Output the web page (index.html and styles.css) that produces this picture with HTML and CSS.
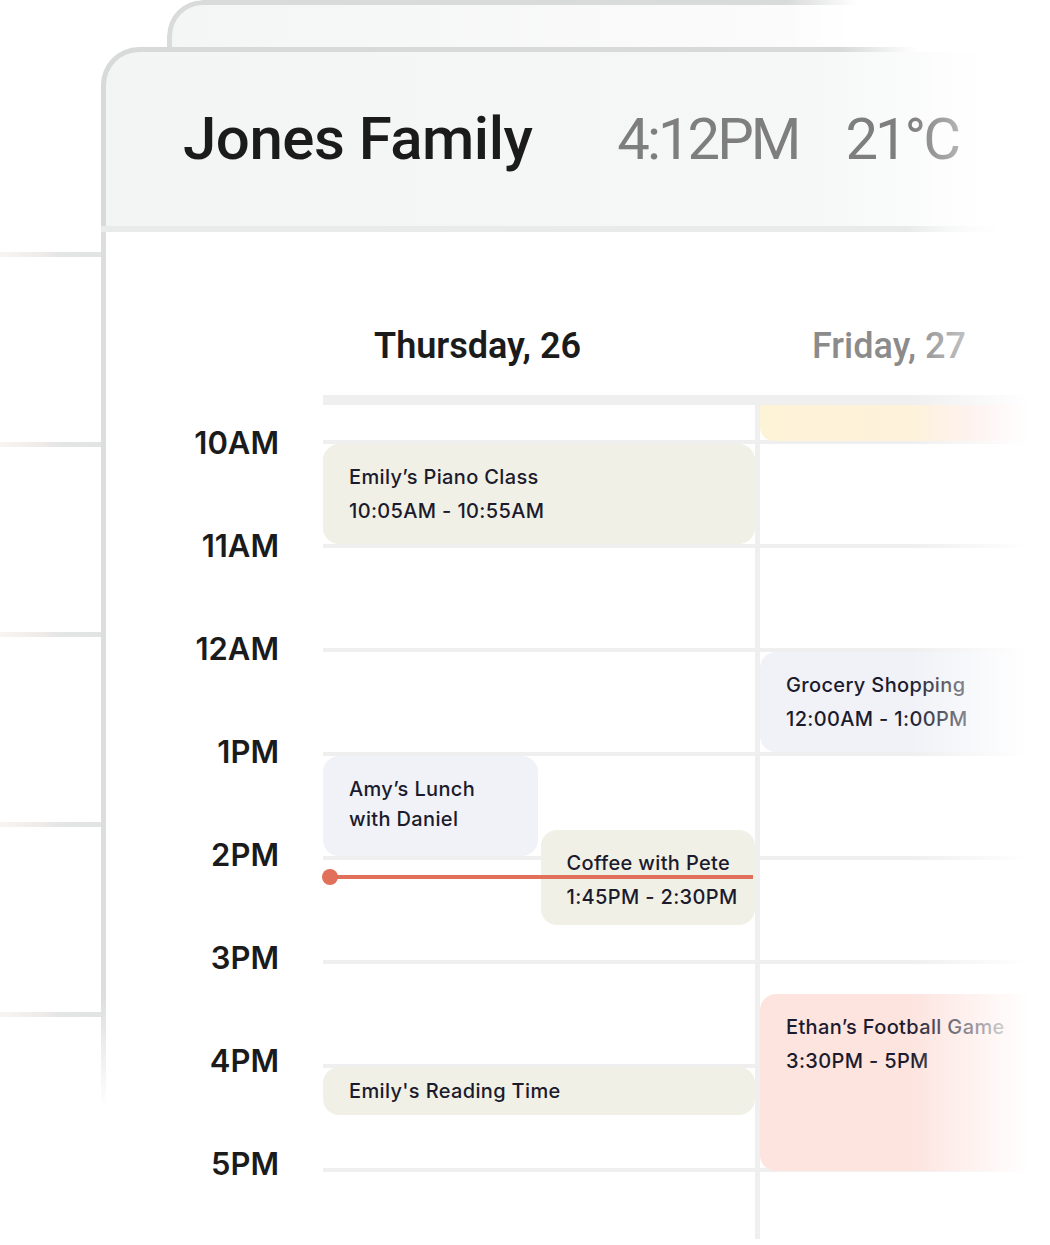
FILE: index.html
```html
<!DOCTYPE html>
<html lang="en">

<head>
  <meta charset="UTF-8" />
  <meta name="viewport" content="width=device-width, initial-scale=1.0" />
  <title>Jones Family Calendar</title>
  <link rel="stylesheet" href="styles.css">
</head>

<body>
  <div class="back-card"></div>

  <div class="scene">
    <div class="rails">
      <div class="rail"></div>
      <div class="rail"></div>
      <div class="rail"></div>
      <div class="rail"></div>
      <div class="rail"></div>
    </div>

    <div class="card">
      <header class="card-head">
        <h1 class="family">Jones Family</h1>
        <span class="clock">4:12PM</span>
        <span class="temp">21°C</span>
      </header>

      <main class="card-body">
        <div class="calendar">
          <div></div>
          <div class="day-title">Thursday, 26</div>
          <div class="day-title next">Friday, 27</div>

          <div class="hours">
            <div class="hour"><span>10AM</span></div>
            <div class="hour"><span>11AM</span></div>
            <div class="hour"><span>12AM</span></div>
            <div class="hour"><span>1PM</span></div>
            <div class="hour"><span>2PM</span></div>
            <div class="hour"><span>3PM</span></div>
            <div class="hour"><span>4PM</span></div>
            <div class="hour"><span>5PM</span></div>
          </div>

          <!-- rows are 5 minute slots, row 2 = 10:00 -->
          <div class="day">
            <div class="event beige wide on-hour" style="grid-row: 2 / 14">
              <div>Emily’s Piano Class</div>
              <div class="when">10:05AM - 10:55AM</div>
            </div>
            <div class="event slate on-hour" style="grid-row: 38 / 50; grid-column: 1">
              <div>Amy’s Lunch<br>with Daniel</div>
            </div>
            <div class="event beige" style="grid-row: 47 / 58; grid-column: 2">
              <div>Coffee with Pete</div>
              <div class="when">1:45PM - 2:30PM</div>
            </div>
            <div class="event beige wide on-hour short" style="grid-row: 74 / 80">
              <div>Emily's Reading Time</div>
            </div>
            <div class="now" style="grid-row: 51 / span 3"></div>
          </div>

          <div class="day friday">
            <div class="event butter" style="grid-row: 1 / 2"></div>
            <div class="event slate on-hour" style="grid-row: 26 / 38">
              <div>Grocery Shopping</div>
              <div class="when">12:00AM - 1:00PM</div>
            </div>
            <div class="event rose to-hour" style="grid-row: 66 / 86">
              <div>Ethan’s Football Game</div>
              <div class="when">3:30PM - 5PM</div>
            </div>
          </div>
        </div>
      </main>
    </div>
  </div>

  <div class="fade"></div>
</body>

</html>
```

FILE: styles.css
```css
body {
  margin: 0;
  height: 1245px;
  overflow: hidden;
  position: relative;
  background: #fff;
  font-family: Roboto, "Liberation Sans", sans-serif;
  color: #1b1b1b;
}

.back-card {
  margin-left: 167px;
  height: 42px;
  border-top: 5px solid #d9dada;
  border-left: 5px solid #d9dada;
  border-top-left-radius: 36px;
  background: linear-gradient(to right, #f4f5f5, #fafafa 60%, #fff);
  -webkit-mask-image: linear-gradient(to right, #000 620px, transparent 690px);
  mask-image: linear-gradient(to right, #000 620px, transparent 690px);
}

.scene {
  display: flex;
  align-items: flex-start;
}

.rails {
  flex: none;
  width: 101px;
  padding-top: 205px;
  display: flex;
  flex-direction: column;
  gap: 185px;
}

.rail {
  height: 5px;
  background: linear-gradient(to right, rgba(240, 234, 230, 0.5), #efebe8 40%, #e4e5e5 60%, #e2e3e3);
}

.card {
  flex: 1;
  min-width: 0;
}

.card-head {
  display: flex;
  align-items: center;
  height: 174px;
  padding-left: 77px;
  border: 5px solid transparent;
  border-right: 0;
  border-bottom: 0;
  border-top-left-radius: 38px;
  background:
    linear-gradient(to right, #f3f4f4, #f6f7f7 75%, #fff 95%) padding-box,
    linear-gradient(to right, #d8d9d9 78%, rgba(216, 217, 217, 0) 86%) border-box;
}

.family {
  margin: 0 85px 0 0;
  font-size: 60px;
  line-height: 60px;
  font-weight: 500;
  letter-spacing: -0.5px;
}

.clock,
.temp {
  font-size: 58px;
  line-height: 60px;
  font-weight: 400;
  color: #7e7e7e;
  letter-spacing: -3px;
}

.clock {
  margin-right: 47px;
}

.card-body {
  display: block;
  height: 1007px;
  overflow: hidden;
  border-top: 6px solid transparent;
  border-left: 5px solid transparent;
  background:
    linear-gradient(to right, #e9eaea 85%, rgba(233, 234, 234, 0) 95%) left top / 100% 6px no-repeat border-box,
    linear-gradient(#dcdddd 76%, rgba(220, 221, 221, 0) 87%) left top / 5px 100% no-repeat border-box,
    #fff padding-box;
}

.calendar {
  display: grid;
  grid-template-columns: 217px 432px 1fr;
}

.day-title {
  padding: 96px 0 31px 51px;
  font-size: 36px;
  line-height: 36px;
  font-weight: 600;
  border-bottom: 10px solid #efefef;
}

.day-title.next {
  padding-left: 57px;
  font-weight: 500;
  color: #8b8b8b;
}

.hours {
  padding-top: 38px;
}

.hour {
  height: 103px;
  padding-right: 44px;
  text-align: right;
  font-family: Inter, "Liberation Sans", sans-serif;
  font-size: 31px;
  line-height: 32px;
  font-weight: 600;
}

.hour span {
  display: block;
  transform: translateY(-50%);
}

.day {
  display: grid;
  grid-template-columns: 1fr 1fr;
  grid-template-rows: 35px repeat(96, calc(104px / 12));
  column-gap: 3px;
  background-image: repeating-linear-gradient(to bottom, #efefef 0 4px, transparent 4px 104px);
  background-position: 0 35px;
  background-size: 100% calc(100% - 35px);
  background-repeat: no-repeat;
}

.day.friday {
  grid-template-columns: 1fr;
  border-left: 5px solid #efefef;
}

.event {
  border-radius: 16px;
  padding: 18px 12px 18px 26px;
  font-family: Inter, "Liberation Sans", sans-serif;
  font-size: 20px;
  line-height: 30px;
  font-weight: 500;
  letter-spacing: 0.35px;
  color: #1c1b2d;
}

.event.wide {
  grid-column: 1 / -1;
}

.event.on-hour {
  margin-top: 4px;
}

.event.to-hour {
  margin-bottom: -4px;
}

.event.short {
  padding-top: 9px;
  padding-bottom: 5px;
}

.event .when {
  margin-top: 4px;
  white-space: nowrap;
}

.beige {
  background: #f0f0e6;
}

.slate {
  background: #f0f2f7;
}

.rose {
  background: #fde4df;
}

.butter {
  border-radius: 0 0 14px 14px;
  background: linear-gradient(to right, #fdf3d7, #fdf2da 55%, #fde6df 72%);
}

.now {
  grid-column: 1 / -1;
  align-self: center;
  height: 4px;
  margin: 0 2px 0 7px;
  background: #e0705a;
  position: relative;
  z-index: 1;
}

.now::before {
  content: "";
  position: absolute;
  left: -8px;
  top: 50%;
  width: 16px;
  height: 16px;
  margin-top: -8px;
  border-radius: 50%;
  background: #e0705a;
}

.fade {
  position: absolute;
  top: 0;
  right: 0;
  width: 140px;
  height: 100%;
  background: linear-gradient(to right, rgba(255, 255, 255, 0), #fff 85%);
  pointer-events: none;
}
```
